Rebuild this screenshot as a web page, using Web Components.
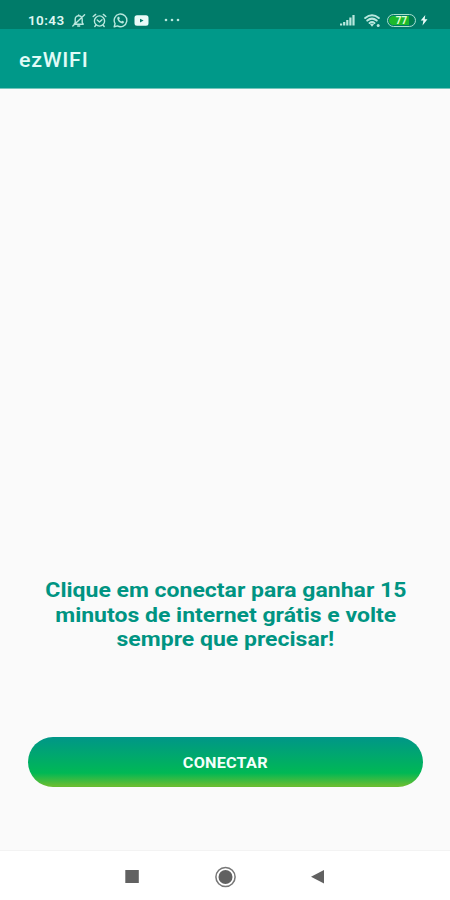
<!DOCTYPE html>
<html lang="pt-BR">
<head>
<meta charset="UTF-8">
<meta name="viewport" content="width=device-width, initial-scale=1.0">
<title>ezWIFI</title>
<style>
    html, body {
        margin: 0;
        height: 100%;
        overflow: hidden;
        font-family: Roboto, sans-serif;
    }
</style>
</head>
<body>
<ez-app>
    <ez-status-bar slot="top" time="10:43" battery="77"></ez-status-bar>
    <ez-toolbar slot="top">ezWIFI</ez-toolbar>
    <ez-message>
        <ez-line>Clique em conectar para ganhar 15</ez-line>
        <ez-line>minutos de internet grátis e volte</ez-line>
        <ez-line>sempre que precisar!</ez-line>
    </ez-message>
    <ez-button>CONECTAR</ez-button>
    <ez-nav-bar slot="bottom"></ez-nav-bar>
</ez-app>

<script>
// Estrutura da tela: barras em cima, conteúdo alinhado embaixo, navegação no rodapé
class EzApp extends HTMLElement {
    constructor() {
        super();
        this.attachShadow({ mode: 'open' });
        this.shadowRoot.innerHTML = `
            <style>
                :host {
                    display: flex;
                    flex-direction: column;
                    height: 100vh;
                    background: #fafafa;
                }

                main {
                    flex: 1;
                    display: flex;
                    flex-direction: column;
                    justify-content: flex-end;
                    padding: 0 27px 63.5px 28px;
                }
            </style>
            <slot name="top"></slot>
            <main><slot></slot></main>
            <slot name="bottom"></slot>
        `;
    }
}

class EzStatusBar extends HTMLElement {
    constructor() {
        super();
        this.attachShadow({ mode: 'open' });
    }

    connectedCallback() {
        this.render();
    }

    render() {
        const time = this.getAttribute('time') || '00:00';
        const battery = this.getAttribute('battery') || '100';

        this.shadowRoot.innerHTML = `
            <style>
                :host {
                    display: flex;
                    justify-content: space-between;
                    align-items: center;
                    box-sizing: border-box;
                    height: 29px;
                    padding: 11px 22px 0 28px;
                    background: #007b69;
                    color: #b9e8de;
                }

                .group {
                    display: flex;
                    align-items: center;
                    height: 18px;
                }

                svg {
                    display: block;
                    fill: none;
                    stroke: currentColor;
                    stroke-width: 1.4;
                    stroke-linecap: round;
                    stroke-linejoin: round;
                }

                .solid {
                    fill: currentColor;
                    stroke: none;
                }

                .time {
                    width: 37px;
                    margin-right: 6px;
                    font-size: 13.5px;
                    font-weight: 600;
                    letter-spacing: 0.4px;
                    color: #def7f2;
                }

                .icons {
                    display: flex;
                    gap: 6px;
                }

                .dots {
                    margin-left: 15px;
                }

                .battery {
                    display: flex;
                    box-sizing: border-box;
                    width: 29px;
                    height: 13px;
                    margin: 0 4px 0 6px;
                    padding: 1px;
                    border: 1.5px solid #a9dfcb;
                    border-radius: 7px;
                }

                .level {
                    flex: 1;
                    border-radius: 5px;
                    background: linear-gradient(90deg, #1cb92c 80%, #007b50 80%);
                    color: #e2ffd9;
                    font-size: 10px;
                    font-weight: 700;
                    line-height: 9px;
                    text-align: center;
                }
            </style>
            <div class="group">
                <span class="time">${time}</span>
                <div class="icons">
                    <svg width="15" height="15" viewBox="0 0 15 15">
                        <path d="M3.2 11.2h9l-1-1.700V6.300a3.500 3.500 0 0 0-7 0v3.200zM6.700 13h2M7.700 2.600V2M1.800 13L13.600 1.800"/>
                    </svg>
                    <svg width="15" height="15" viewBox="0 0 15 15">
                        <circle cx="7.500" cy="8" r="5.100"/>
                        <path d="M1.200 3.500L3.700 1.400M13.800 3.500l-2.500-2.100M5.200 7l2.300 2 2.500-2.200M3.800 12.200l-1 1.300M11.200 12.200l1 1.300"/>
                    </svg>
                    <svg width="15" height="15" viewBox="0 0 15 15">
                        <path d="M1.200 13.800l.9-3.200a6.300 6.300 0 1 1 2.400 2.300z"/>
                        <path class="solid" d="M4.800 4.100c.6-.6 1.300-.6 1.500 0l.5 1.400-.7.9c.5 1 1.200 1.700 2.300 2.200l.8-.9 1.600.8c.5.3.1 1.300-.5 1.700-1 .6-2.400.1-3.800-.9C4.900 8 3.500 5.400 4.800 4.100z"/>
                    </svg>
                    <svg width="15" height="15" viewBox="0 0 15 15">
                        <path class="solid" style="fill:#e9fbf8" fill-rule="evenodd" d="M3 2.300h9q2.500 0 2.500 2.500v5.400q0 2.500-2.500 2.500H3Q.5 12.700.5 10.200V4.800Q.5 2.300 3 2.300zM6 5.700v3.800l3.600-1.900z"/>
                    </svg>
                </div>
                <svg class="dots solid" width="16" height="4" viewBox="0 0 16 4">
                    <circle cx="2" cy="2" r="1.300"/><circle cx="8" cy="2" r="1.300"/><circle cx="14" cy="2" r="1.300"/>
                </svg>
            </div>
            <div class="group">
                <svg class="solid" width="15" height="12" viewBox="0 0 15 12">
                    <path d="M0 9.500h2.200V11.500H0zM3.100 8h2.200v3.500H3.100zM6.200 6h2.200v5.500H6.200zM9.300 3.500h2.200v8H9.300zM12.400 1h2.200v10.500h-2.200z"/>
                </svg>
                <svg width="17" height="15" viewBox="0 0 17 15" style="margin-left:9px">
                    <path d="M1.200 5q6.800-5.500 13.600 0M3.300 7.600q4.700-4 9.400 0M5.600 10q2.400-2 4.800 0" stroke-width="2"/>
                    <path class="solid" d="M8 13.800l-2-2.500q2-1.500 4 0z"/>
                    <circle class="solid" cx="14.200" cy="12.500" r="1.500"/>
                </svg>
                <div class="battery"><span class="level">${battery}</span></div>
                <svg class="solid" width="8" height="12" viewBox="0 0 8 12">
                    <path fill="#e9fbf8" d="M5.300 1L.7 6.500h2.700L2.500 11.500 7.500 5.300H4.700z"/>
                </svg>
            </div>
        `;
    }
}

class EzToolbar extends HTMLElement {
    constructor() {
        super();
        this.attachShadow({ mode: 'open' });
        this.shadowRoot.innerHTML = `
            <style>
                :host {
                    display: flex;
                    align-items: center;
                    box-sizing: border-box;
                    height: 60px;
                    padding: 2px 19px 0;
                    border-bottom: 1px solid #74c5bb;
                    background: #009989;
                    color: #e0fbf7;
                    font-size: 20px;
                    font-weight: 500;
                    letter-spacing: 0.7px;
                }

                span {
                    transform: scaleX(1.07);
                    transform-origin: left;
                }
            </style>
            <span><slot></slot></span>
        `;
    }
}

class EzMessage extends HTMLElement {
    constructor() {
        super();
        this.attachShadow({ mode: 'open' });
        this.shadowRoot.innerHTML = `
            <style>
                :host {
                    display: flex;
                    flex-direction: column;
                    align-items: center;
                    margin-bottom: 85px;
                    color: #009482;
                    font-size: 21px;
                    font-weight: 700;
                    line-height: 24.5px;
                }
            </style>
            <slot></slot>
        `;
    }
}

class EzLine extends HTMLElement {
    constructor() {
        super();
        this.attachShadow({ mode: 'open' });
        this.shadowRoot.innerHTML = `
            <style>
                :host {
                    display: block;
                    white-space: nowrap;
                    transform: scaleX(1.095);
                }
            </style>
            <slot></slot>
        `;
    }
}

class EzButton extends HTMLElement {
    constructor() {
        super();
        this.attachShadow({ mode: 'open' });
        this.shadowRoot.innerHTML = `
            <style>
                :host {
                    display: block;
                }

                button {
                    display: block;
                    width: 100%;
                    height: 50px;
                    padding: 2px 0 0;
                    border: 0;
                    border-radius: 25px;
                    background: linear-gradient(#009688, #00b855 72%, #66bd32 97%);
                    color: #f4fffb;
                    font: 700 15px Roboto, sans-serif;
                    letter-spacing: 0.2px;
                }

                span {
                    display: inline-block;
                    transform: scaleX(1.08);
                }
            </style>
            <button type="button"><span><slot></slot></span></button>
        `;
    }
}

class EzNavBar extends HTMLElement {
    constructor() {
        super();
        this.attachShadow({ mode: 'open' });
        this.shadowRoot.innerHTML = `
            <style>
                :host {
                    display: flex;
                    justify-content: center;
                    align-items: center;
                    gap: 72px;
                    box-sizing: border-box;
                    height: 50px;
                    padding-top: 3px;
                    border-top: 1px solid #f3f3f3;
                    background: #fff;
                }

                svg {
                    display: block;
                    fill: #616161;
                }
            </style>
            <svg width="22" height="22" viewBox="0 0 22 22"><rect x="5.300" y="4" width="13.500" height="13"/></svg>
            <svg width="22" height="22" viewBox="0 0 22 22">
                <circle cx="11.500" cy="11" r="9.600" fill="none" stroke="#777" stroke-width="1.500"/>
                <circle cx="11.500" cy="11" r="7"/>
            </svg>
            <svg width="22" height="22" viewBox="0 0 22 22"><path d="M16 4v13.500L3 10.700z"/></svg>
        `;
    }
}

customElements.define('ez-app', EzApp);
customElements.define('ez-status-bar', EzStatusBar);
customElements.define('ez-toolbar', EzToolbar);
customElements.define('ez-message', EzMessage);
customElements.define('ez-line', EzLine);
customElements.define('ez-button', EzButton);
customElements.define('ez-nav-bar', EzNavBar);
</script>
</body>
</html>
